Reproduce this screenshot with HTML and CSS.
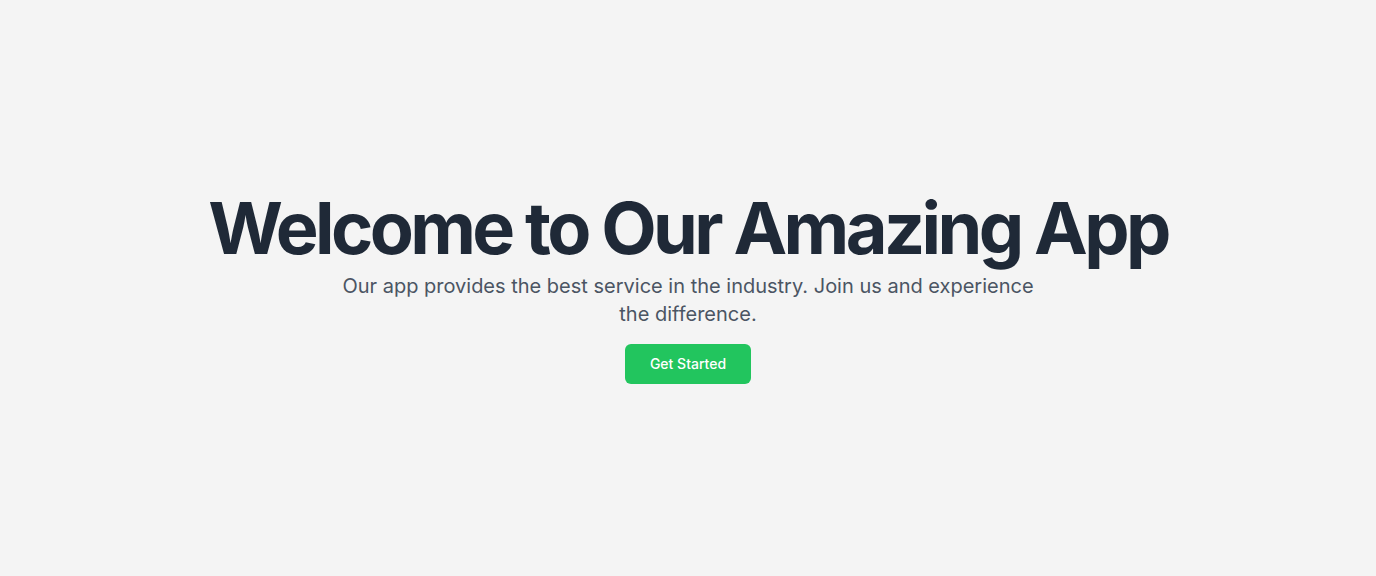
FILE: index.html
```html
<!DOCTYPE html>
<html lang="en">
<head>
<meta charset="utf-8">
<title>Welcome</title>
<link rel="stylesheet" href="styles.css">
</head>
<body>
<main class="hero">
  <h1 class="hero-title">Welcome to Our Amazing App</h1>
  <p class="hero-text">Our app provides the best service in the industry. Join us and experience the difference.</p>
  <button class="hero-button" type="button">Get Started</button>
</main>
</body>
</html>
```
FILE: styles.css
```css
* { box-sizing: border-box; }
html, body { margin: 0; padding: 0; }
body {
  background: #f4f4f4;
  font-family: Inter, "Noto Sans", sans-serif;
}
.hero {
  min-height: 100vh;
  display: flex;
  flex-direction: column;
  align-items: center;
  justify-content: center;
  text-align: center;
  padding-bottom: 1px;
}
.hero-title {
  margin: 0 0 8px;
  font-size: 72px;
  line-height: 72px;
  font-weight: 700;
  letter-spacing: -0.05em;
  color: #1f2937;
}
.hero-text {
  margin: 0 0 16px;
  max-width: 700px;
  font-size: 20px;
  line-height: 28px;
  color: #4b5563;
}
.hero-button {
  border: 0;
  border-radius: 6px;
  background: #22c55e;
  color: #ffffff;
  font-family: Inter, "Noto Sans", sans-serif;
  font-size: 14px;
  font-weight: 500;
  line-height: 20px;
  padding: 10px 25px;
  cursor: pointer;
}
```
